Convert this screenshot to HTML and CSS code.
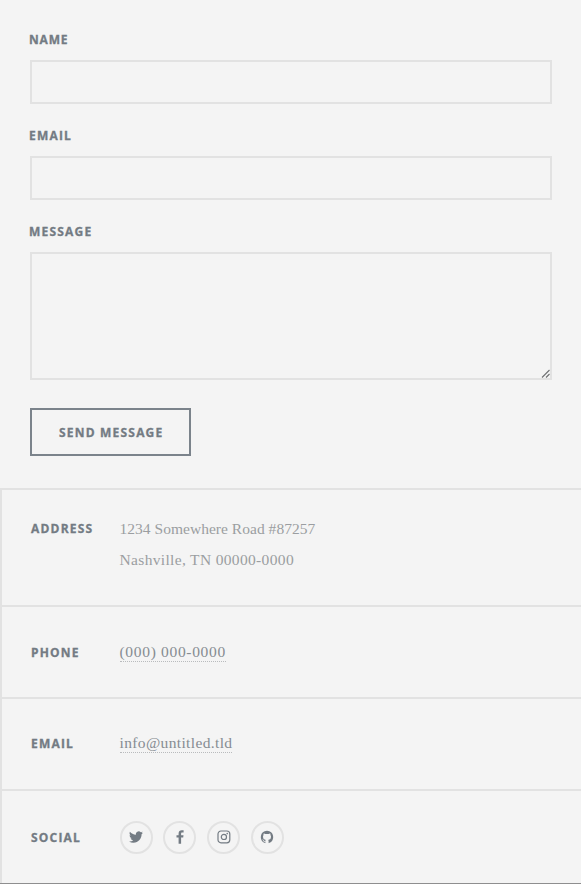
FILE: index.html
```html
<!DOCTYPE html>
<html lang="en">
<head>
<meta charset="utf-8">
<title>Contact</title>
<link rel="stylesheet" href="styles.css">
</head>
<body>
<form class="form">
  <div class="field"><label class="label tight" for="name">NAME</label><input id="name" class="input" type="text"></div>
  <div class="field"><label class="label" for="email">EMAIL</label><input id="email" class="input" type="text"></div>
  <div class="field"><label class="label" for="message">MESSAGE</label><div class="area-wrap"><textarea id="message" class="input area"></textarea><svg class="grip" width="10" height="10" viewBox="0 0 10 10"><path d="M1 8.5 8.5 1M5 8.5 8.5 5" fill="none" stroke="#707274" stroke-width="1.1"/></svg></div></div>
  <button class="button" type="button">SEND MESSAGE</button>
</form>
<section class="contact">
  <div class="row address"><h3 class="head">ADDRESS</h3><div class="text"><span class="street">1234 Somewhere Road #87257</span><br><span class="city">Nashville, TN 00000-0000</span></div></div>
  <div class="row phone"><h3 class="head">PHONE</h3><div class="text"><a class="link">(000) 000-0000</a></div></div>
  <div class="row mail"><h3 class="head">EMAIL</h3><div class="text"><a class="link">info@untitled.tld</a></div></div>
  <div class="row social"><h3 class="head">SOCIAL</h3>
    <div class="icons">
      <a class="icon"><svg width="14" height="14" viewBox="0 0 24 24"><path fill="currentColor" d="M23.95 4.57a10 10 0 0 1-2.82.77 4.96 4.96 0 0 0 2.16-2.72c-.95.55-2 .96-3.13 1.18a4.92 4.92 0 0 0-8.38 4.48C7.69 8.1 4.07 6.13 1.64 3.16a4.82 4.82 0 0 0-.67 2.48c0 1.71.87 3.21 2.19 4.1a4.9 4.9 0 0 1-2.23-.62v.06a4.92 4.92 0 0 0 3.95 4.83 5 5 0 0 1-2.21.08 4.94 4.94 0 0 0 4.6 3.42A9.87 9.87 0 0 1 0 19.54a14 14 0 0 0 7.55 2.21c9.05 0 14-7.5 14-13.98 0-.21 0-.42-.02-.63a9.94 9.94 0 0 0 2.46-2.55z"/></svg></a>
      <a class="icon"><svg width="14" height="14" viewBox="0 0 14 14"><path fill="currentColor" d="M10.6.3v2.2H9.3c-1 0-1.2.5-1.2 1.2v1.5h2.4l-.3 2.4H8.1v6.1H5.6V7.6H3.5V5.2h2.1V3.4C5.6 1.3 6.9.2 8.8.2c.9 0 1.6 0 1.8.1z"/></svg></a>
      <a class="icon"><svg width="14" height="14" viewBox="0 0 14 14"><rect x="1" y="1" width="11.8" height="11.8" rx="3" fill="none" stroke="currentColor" stroke-width="1.2"/><circle cx="6.9" cy="6.9" r="2.6" fill="none" stroke="currentColor" stroke-width="1.2"/><circle cx="10.2" cy="3.6" r=".8" fill="currentColor"/></svg></a>
      <a class="icon"><svg width="14" height="14" viewBox="0 0 14 14"><path fill="currentColor" d="M7 .7A6.4 6.4 0 0 0 5 13.1c.3.1.4-.1.4-.3v-1.2c-1.7.4-2.1-.7-2.1-.7-.3-.7-.7-.9-.7-.9-.6-.4 0-.4 0-.4.6 0 1 .6 1 .6.5 1 1.5.7 1.8.5.1-.4.2-.7.4-.8-1.4-.2-2.8-.7-2.8-3.1 0-.7.2-1.2.6-1.7-.1-.2-.3-.8.1-1.7 0 0 .5-.1 1.7.7a6 6 0 0 1 3.2 0c1.2-.8 1.7-.7 1.7-.7.3.9.1 1.5.1 1.7.4.5.6 1 .6 1.7 0 2.4-1.4 2.9-2.8 3.1.2.2.4.6.4 1.2v1.7c0 .2.1.4.4.3A6.4 6.4 0 0 0 7 .7z"/></svg></a>
    </div>
  </div>
</section>
</body>
</html>
```
FILE: styles.css
```css
* { box-sizing: border-box; }
html { overflow: hidden; }
body { margin: 0; height: 884px; background: #f4f4f4; color: #9b9ea1; display: flex; flex-direction: column; border-bottom: 1px solid #8e8e8f; }
.form { height: 488px; padding: 29px 29.5px 0 30px; flex: none; }
.field { height: 96px; }
.label { display: block; height: 31px; padding-top: 2px; margin-left: -1px; }
.label, .head, .button { font: 700 12px/18px "Open Sans", "Noto Sans", sans-serif; letter-spacing: 1.2px; color: #737b83; white-space: nowrap; -webkit-text-stroke: .3px #737b83; }
.label.tight { letter-spacing: .8px; }
.input { display: block; width: 100%; height: 44px; margin: 0; padding: 0 16px; border: 2px solid #e2e2e2; border-radius: 0; background: transparent; outline: none; }
.area-wrap { position: relative; }
.area { height: 128px; resize: none; }
.grip { position: absolute; right: 1px; bottom: 1px; }
.field:nth-child(3) { height: 187px; }
.button { display: block; width: 161px; height: 48px; margin: 0; padding: 1px 0 0 27px; text-align: left; border: 2px solid #7b838b; border-radius: 0; background: transparent; }
.contact { flex: 1; border-left: 2px solid #e2e2e2; }
.row { display: flex; border-top: 2px solid #e2e2e2; padding-left: 29px; }
.head { width: 88.5px; margin: 0; flex: none; }
.address { height: 117px; padding-top: 23px; }
.phone { height: 92px; padding-top: 29px; }
.mail { height: 92px; padding-top: 28px; }
.social { height: 94px; padding-top: 29.5px; }
.address .head { padding-top: 7px; }
.phone .head { padding-top: 8px; }
.mail .head { padding-top: 8px; }
.social .head { padding-top: 8px; }
.text { font: 15.5px/31px "Liberation Serif", serif; white-space: nowrap; }
.street { letter-spacing: .03px; }
.city { letter-spacing: .34px; }
.phone .link { letter-spacing: .68px; }
.mail .link { letter-spacing: .36px; }
.link { color: #868c92; border-bottom: 1px dotted #b9bbbd; padding-bottom: 1px; }
.icons { display: flex; gap: 10.8px; }
.icon { width: 33px; height: 33px; border: 2px solid #e2e2e2; border-radius: 50%; display: flex; align-items: center; justify-content: center; color: #737b83; }
```
